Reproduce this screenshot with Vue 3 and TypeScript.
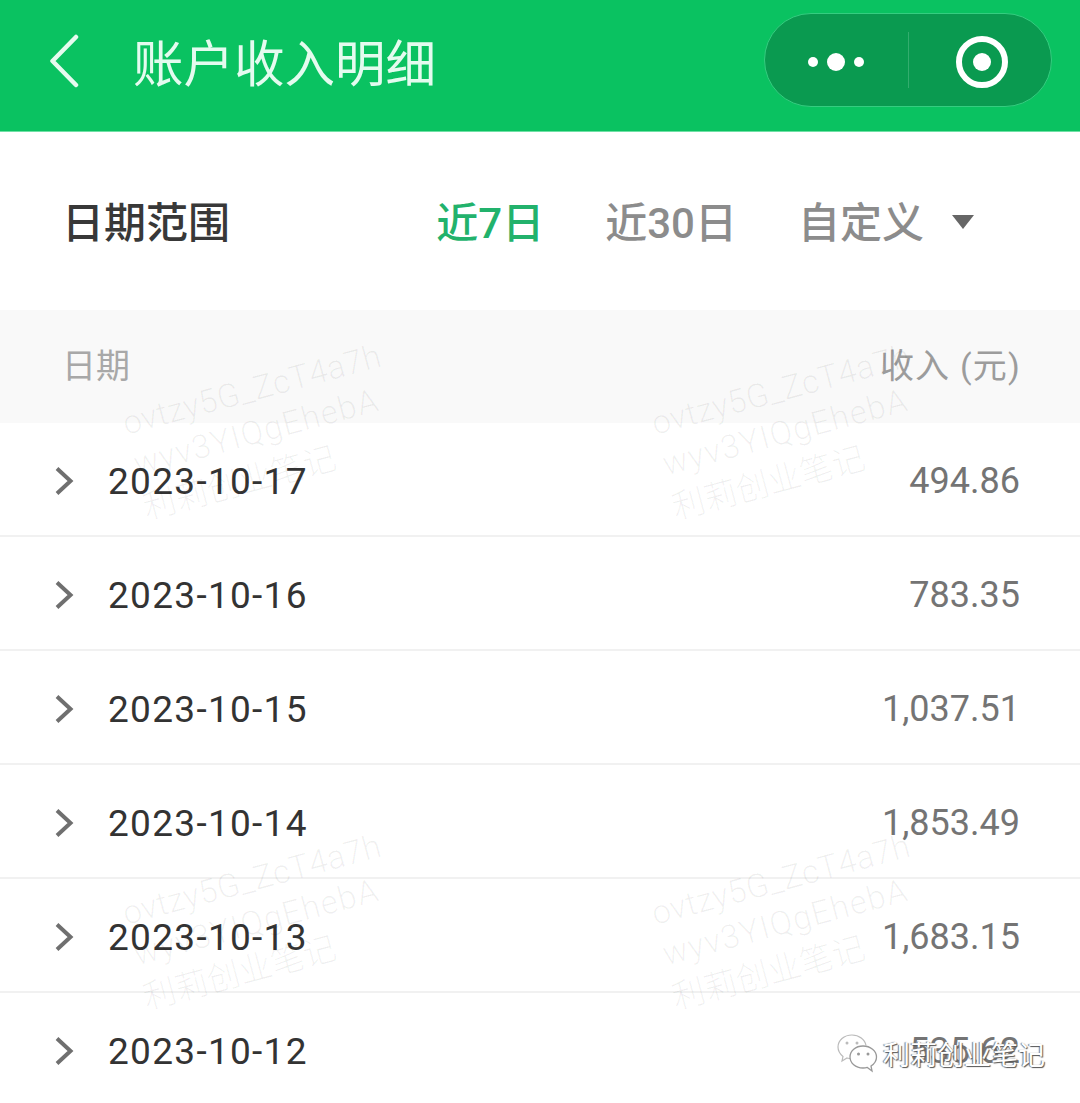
<script setup lang="ts">
interface Row { date: string; amount: string }
const rows: Row[] = [
  { date: '2023-10-17', amount: '494.86' },
  { date: '2023-10-16', amount: '783.35' },
  { date: '2023-10-15', amount: '1,037.51' },
  { date: '2023-10-14', amount: '1,853.49' },
  { date: '2023-10-13', amount: '1,683.15' },
  { date: '2023-10-12', amount: '535.62' },
]
const marks = [
  { id: 'a', left: '118px', top: '404px' },
  { id: 'b', left: '647px', top: '404px' },
  { id: 'c', left: '118px', top: '894px' },
  { id: 'd', left: '647px', top: '894px' },
]
</script>

<template>
  <div class="page">
    <header class="nav">
      <svg class="back" width="34" height="54" viewBox="0 0 34 54">
        <path d="M28 3 L4.500 27 L28 51" fill="none" stroke="#e6fbef" stroke-width="4.500" stroke-linecap="round" stroke-linejoin="round" />
      </svg>
      <h1 class="title">账户收入明细</h1>
      <div class="capsule">
        <div class="dots"><i class="dot"></i><i class="dot big"></i><i class="dot"></i></div>
        <span class="sep"></span>
        <div class="target"><i class="core"></i></div>
      </div>
    </header>

    <section class="filter">
      <span class="filter-label">日期范围</span>
      <div class="tabs">
        <span class="tab active">近7日</span>
        <span class="tab">近30日</span>
        <span class="tab custom">自定义<i class="caret"></i></span>
      </div>
    </section>

    <div class="thead">
      <span>日期</span>
      <span class="th-right">收入 (元)</span>
    </div>

    <ul class="list">
      <li v-for="r in rows" :key="r.date" class="row">
        <svg class="chev" width="20" height="30" viewBox="0 0 20 30">
          <path d="M3 2.500 L16.500 15 L3 27.500" fill="none" stroke="#6f6f6f" stroke-width="4" />
        </svg>
        <span class="date">{{ r.date }}</span>
        <span class="amount">{{ r.amount }}</span>
      </li>
    </ul>

    <div v-for="m in marks" :key="m.id" class="mark" :style="{ left: m.left, top: m.top }">
      <div class="mark-a">ovtzy5G_ZcT4a7h</div>
      <div class="mark-b">wyv3YIQgEhebA</div>
      <div class="mark-cn">利莉创业笔记</div>
    </div>

    <div class="stamp">
      <svg width="42" height="40" viewBox="0 0 42 40">
        <path d="M16 2C8 2 2 7.500 2 14c0 4 2 7 5 9.500L6 28l5-3c1.500.5 3 .8 5 .8" fill="rgba(255,255,255,.75)" stroke="#bbb" stroke-width="1.200" />
        <path d="M16 2c7 0 13 4.500 14 10.500" fill="rgba(255,255,255,.75)" stroke="#bbb" stroke-width="1.200" />
        <path d="M27 13c-7.500 0-13 5-13 11s5.500 11 13 11c1.500 0 3-.2 4.300-.6L36 38l-1-5c3.500-2.200 5.500-5.300 5.500-9 0-6-6-11-13.500-11z" fill="#fff" stroke="#999" stroke-width="1.300" />
        <circle cx="11" cy="10" r="1.500" fill="#bbb" />
        <circle cx="21" cy="10" r="1.500" fill="#bbb" />
        <circle cx="22.500" cy="21" r="1.500" fill="#999" />
        <circle cx="32" cy="21" r="1.500" fill="#999" />
      </svg>
      <span class="stamp-text">利莉创业笔记</span>
    </div>
  </div>
</template>

<style>
html, body { margin: 0; background: #fff; }
</style>

<style scoped>
.page {
  position: relative;
  width: 1080px;
  height: 1103px;
  overflow: hidden;
  background: #fff;
  font-family: Roboto, "Noto Sans CJK SC", sans-serif;
}
.nav {
  height: 132px;
  box-sizing: border-box;
  background: #0ac261;
  border-bottom: 1px solid #6fe0a5;
  display: flex;
  align-items: center;
  padding: 0 28px 11px 48px;
}
.back { flex: none; margin-top: 2px; }
.title {
  margin: 0 0 0 51px;
  flex: 1;
  font-family: "Noto Sans CJK SC", sans-serif;
  font-size: 50.500px;
  line-height: 60px;
  font-weight: 400;
  color: #e4fbef;
}
.capsule {
  width: 288px;
  height: 94px;
  box-sizing: border-box;
  border: 1px solid #35cd80;
  border-radius: 47px;
  background: #0a9a50;
  display: flex;
  align-items: center;
  padding-top: 4px;
}
.dots {
  width: 99px;
  padding-right: 44px;
  flex: none;
  display: flex;
  align-items: center;
  justify-content: flex-end;
  gap: 9px;
}
.dot { width: 10px; height: 10px; border-radius: 50%; background: #fff; }
.dot.big { width: 18px; height: 18px; }
.sep { width: 1px; height: 56px; background: #33ad6e; flex: none; margin-top: -4px; }
.target {
  width: 52px;
  height: 52px;
  box-sizing: border-box;
  border: 6px solid #fff;
  border-radius: 50%;
  margin-left: 47px;
  display: flex;
  align-items: center;
  justify-content: center;
}
.core { width: 18px; height: 18px; border-radius: 50%; background: #fff; }
.filter {
  height: 178px;
  box-sizing: border-box;
  display: flex;
  align-items: center;
  justify-content: space-between;
  padding: 0 106px 4px 62px;
}
.filter-label {
  font-family: "Noto Sans CJK SC", sans-serif;
  font-size: 42px;
  font-weight: 500;
  color: #383838;
}
.tabs { display: flex; align-items: center; gap: 61px; }
.tab {
  font-size: 42px;
  font-weight: 500;
  color: #8c8c8c;
  display: flex;
  align-items: center;
}
.tab.active { color: #22b26c; }
.caret {
  width: 0;
  height: 0;
  margin: 6px 0 0 28px;
  border-left: 11px solid transparent;
  border-right: 11px solid transparent;
  border-top: 14px solid #666;
}
.thead {
  height: 113px;
  box-sizing: border-box;
  background: #f9f9f9;
  display: flex;
  align-items: center;
  justify-content: space-between;
  padding: 0 59px 7px 62px;
  font-size: 34px;
  color: #a8a8a8;
}
.th-right { color: #9c9c9c; letter-spacing: 1.200px; }
.list { margin: 0; padding: 0; list-style: none; }
.row {
  height: 114px;
  box-sizing: border-box;
  display: flex;
  align-items: center;
  padding: 4px 60px 0 54px;
  border-bottom: 2px solid #f1f1f1;
}
.chev { flex: none; }
.date {
  margin-left: 34px;
  flex: 1;
  font-size: 37px;
  letter-spacing: 1.300px;
  color: #333;
}
.amount {
  font-size: 36px;
  color: #747474;
}
.mark {
  position: absolute;
  white-space: nowrap;
  transform: rotate(-15deg);
  transform-origin: left top;
  color: rgba(0, 0, 0, 0.06);
  font-size: 33px;
  font-weight: 300;
  line-height: 42px;
  pointer-events: none;
}
.mark-a { letter-spacing: 0.400px; }
.mark-b { letter-spacing: 1.200px; }
.mark-cn { font-family: "Noto Sans CJK SC", sans-serif; margin-left: -2px; }
.stamp {
  position: absolute;
  left: 836px;
  top: 1033px;
  display: flex;
  align-items: center;
  gap: 5px;
}
.stamp-text {
  font-family: "Noto Sans CJK SC", sans-serif;
  font-size: 27px;
  color: #fff;
  text-shadow: 1px 1px 1px #555, -1px 0 1px #777;
}
</style>
